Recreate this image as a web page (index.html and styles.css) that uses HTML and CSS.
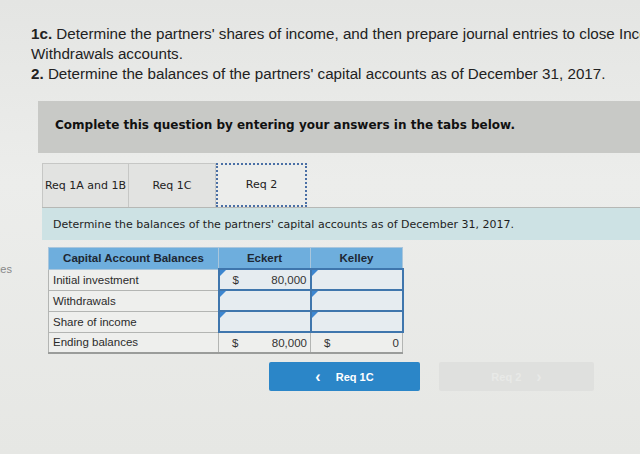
FILE: index.html
```html
<!DOCTYPE html>
<html lang="en">
<head>
    <meta charset="UTF-8">
    <title>Req 2</title>
    <link rel="stylesheet" href="styles.css">
</head>
<body>

<div class="page">
    <!-- left sidebar, mostly off screen -->
    <div class="side">
        <span class="side-label">Entries</span>
    </div>

    <div class="main">
        <div class="question">
            <p><b>1c.</b> Determine the partners' shares of income, and then prepare journal entries to close Income Summary and Withdrawals accounts.</p>
            <p><b>2.</b> Determine the balances of the partners' capital accounts as of December 31, 2017.</p>
        </div>

        <div class="notice">Complete this question by entering your answers in the tabs below.</div>

        <div class="tabs">
            <div class="tab">Req 1A and 1B</div>
            <div class="tab">Req 1C</div>
            <div class="tab active">Req 2</div>
        </div>

        <div class="prompt">Determine the balances of the partners' capital accounts as of December 31, 2017.</div>

        <table class="balances">
            <tr>
                <th class="label-col">Capital Account Balances</th>
                <th class="num-col">Eckert</th>
                <th class="num-col">Kelley</th>
            </tr>
            <tr>
                <td class="label">Initial investment</td>
                <td class="input"><span class="cur">$</span><span class="val">80,000</span></td>
                <td class="input"></td>
            </tr>
            <tr>
                <td class="label">Withdrawals</td>
                <td class="input"></td>
                <td class="input"></td>
            </tr>
            <tr>
                <td class="label">Share of income</td>
                <td class="input"></td>
                <td class="input"></td>
            </tr>
            <tr class="total">
                <td class="label">Ending balances</td>
                <td><span class="cur">$</span><span class="val">80,000</span></td>
                <td><span class="cur">$</span><span class="val">0</span></td>
            </tr>
        </table>

        <div class="nav">
            <button class="btn prev"><span class="chev">&lsaquo;</span> Req 1C</button>
            <button class="btn next" disabled>Req 2 <span class="chev">&rsaquo;</span></button>
        </div>
    </div>
</div>

</body>
</html>
```

FILE: styles.css
```css
body {
    margin: 0;
    background: linear-gradient(180deg, #e4e5e3 0%, #ecedeb 40%, #e6e7e4 100%);
    font-family: "Liberation Sans", Arial, sans-serif;
    color: #222;
    height: 454px;
    overflow: hidden;
}
.page {
    display: flex;
}
.side {
    width: 12px;
    flex: none;
    overflow: hidden;
    direction: rtl;
    white-space: nowrap;
    padding-top: 263px;
    font-size: 11px;
    color: #888;
}
.main {
    width: 628px;
    flex: none;
    overflow: hidden;
}
.question {
    padding: 24px 0 0 19px;
    font-size: 15.2px;
    line-height: 20px;
    width: 800px;
}
.question p {
    margin: 0;
}
.notice {
    margin: 17px 0 0 26px;
    height: 52px;
    padding-left: 17px;
    box-sizing: border-box;
    background: #c8c9c6;
    font-family: "DejaVu Sans", Verdana, sans-serif;
    font-weight: bold;
    font-size: 12px;
    line-height: 48px;
    color: #111;
}
.tabs {
    display: flex;
    margin: 10px 0 0 30px;
    height: 44px;
    border-bottom: 1px solid #b6b8b5;
}
.tab {
    width: 87px;
    box-sizing: border-box;
    background: #e2e3e1;
    border: 1px solid #c6c7c5;
    border-bottom: none;
    text-align: center;
    line-height: 43px;
    font-family: "DejaVu Sans", Verdana, sans-serif;
    font-size: 11px;
    color: #222;
}
.tab + .tab {
    border-left: none;
}
.tab.active {
    width: 91px;
    background: #ecedeb;
    border: 2px dotted #4a6fa5;
    line-height: 40px;
}
.prompt {
    margin-left: 30px;
    height: 32px;
    padding-left: 11px;
    background: #cde2e4;
    font-family: "DejaVu Sans", Verdana, sans-serif;
    font-size: 11px;
    line-height: 34px;
    color: #1e1e1e;
}
.balances {
    margin: 7px 0 0 36px;
    border-collapse: collapse;
    font-size: 11.5px;
}
.balances th {
    height: 20px;
    padding: 0;
    background: #6eaedd;
    border: 1px solid #a9c6dc;
    color: #1d2733;
    font-weight: bold;
    text-align: center;
}
.label-col {
    width: 169px;
}
.num-col {
    width: 91px;
}
.balances td {
    height: 19px;
    padding: 0 3px;
    border: 1px solid #b3b5b3;
    background: #eeefed;
    position: relative;
}
.balances td.label {
    padding-left: 4px;
    color: #2b2b2b;
}
.balances td.input {
    border: 2px solid #3f76ad;
    background: #e6ecf0;
}
.balances td.input::before {
    content: "";
    position: absolute;
    left: 0;
    top: 0;
    border-top: 6px solid #3c86d0;
    border-right: 6px solid transparent;
}
.cur {
    float: left;
    padding-left: 10px;
    color: #333;
}
.val {
    float: right;
    color: #333;
}
.total td {
    border-bottom: 2px solid #9a9c9a;
}
.nav {
    display: flex;
    gap: 19px;
    margin: 8px 0 0 257px;
}
.btn {
    width: 151px;
    height: 29px;
    border: none;
    border-radius: 2px;
    font-family: "Liberation Sans", Arial, sans-serif;
    font-weight: bold;
    font-size: 11px;
}
.btn.prev {
    background: #2b86c8;
    color: #fff;
}
.btn.next {
    width: 155px;
    background: #dfe0de;
    color: #e8e9e7;
}
.chev {
    font-size: 16px;
    margin-right: 12px;
    vertical-align: -1px;
}
.btn.next .chev {
    margin: 0 0 0 12px;
}
```
